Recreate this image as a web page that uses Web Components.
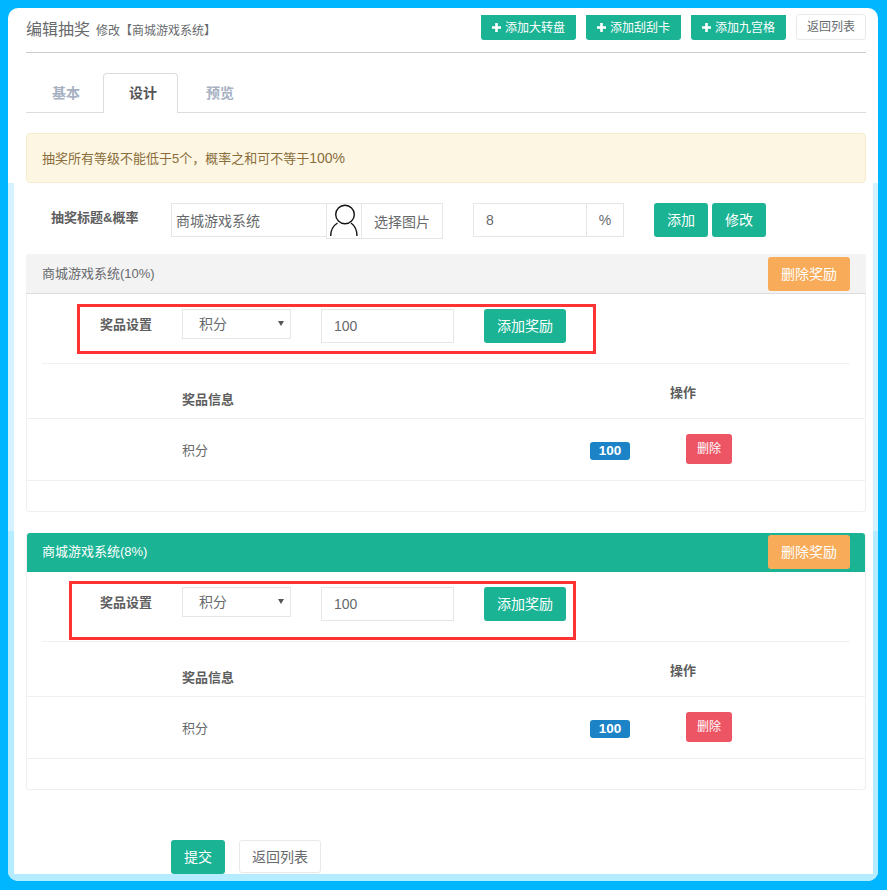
<!DOCTYPE html>
<html lang="zh">
<head>
<meta charset="utf-8">
<title>编辑抽奖</title>
<style>
  html, body { margin: 0; padding: 0; }
  body { background: #00b7ff; font-family: "Liberation Sans", "Noto Sans CJK SC", sans-serif; color: #676a6c; }
</style>
</head>
<body>
<lottery-page>
  <page-head slot="head" title-text="编辑抽奖" sub-text="修改【商城游戏系统】">
    <ui-btn tone="green" plus style="width:95px;height:25px;font-size:12px;border-radius:0 0 3px 3px;margin-top:7px">添加大转盘</ui-btn>
    <ui-btn tone="green" plus style="width:95px;height:25px;font-size:12px;border-radius:0 0 3px 3px;margin-top:7px">添加刮刮卡</ui-btn>
    <ui-btn tone="green" plus style="width:95px;height:25px;font-size:12px;border-radius:0 0 3px 3px;margin-top:7px">添加九宫格</ui-btn>
    <ui-btn tone="white" style="width:70px;height:26px;font-size:12px;margin-top:6px">返回列表</ui-btn>
  </page-head>
  <tab-bar slot="head"></tab-bar>
  <alert-box slot="head"></alert-box>

  <title-row></title-row>

  <prize-panel heading="商城游戏系统(10%)" style="margin-top:15px"></prize-panel>
  <prize-panel heading="商城游戏系统(8%)" active style="margin-top:21px"></prize-panel>

  <form-foot></form-foot>
</lottery-page>

<script>
// ── Bouton ────────────────────────────────────────────────────────────────────
class UiBtn extends HTMLElement {
  constructor() {
    super();
    const shadow = this.attachShadow({ mode: "open" });
    const plus = this.hasAttribute("plus")
      ? `<svg width="9" height="9" viewBox="0 0 9 9"><path d="M3.2 0h2.6v3.2H9v2.6H5.8V9H3.2V5.8H0V3.2h3.2z" fill="#fff"/></svg>`
      : "";
    shadow.innerHTML = `
      <style>
        :host {
          display: inline-flex;
          align-items: center;
          justify-content: center;
          gap: 4px;
          box-sizing: border-box;
          flex: none;
          font-size: 14px;
          line-height: 20px;
          border-radius: 3px;
          color: #fff;
        }
        :host([tone="green"]) { background: #1ab394; }
        :host([tone="orange"]) { background: #f8ac59; }
        :host([tone="red"]) { background: #ed5565; }
        :host([tone="white"]) { background: #fff; border: 1px solid #e7eaec; color: #676a6c; }
      </style>
      ${plus}<slot></slot>
    `;
  }
}
customElements.define("ui-btn", UiBtn);

// ── Cadre de page ─────────────────────────────────────────────────────────────
class LotteryPage extends HTMLElement {
  constructor() {
    super();
    this.attachShadow({ mode: "open" }).innerHTML = `
      <style>
        :host { display: block; box-sizing: border-box; height: 890px; padding: 8px 9px 9px 8px; }
        .panel { height: 873px; background: #fff; border-radius: 10px; overflow: hidden; display: flex; flex-direction: column; }
        .head { height: 175px; padding: 0 12px 0 18px; flex: none; }
        .strip {
          flex: 1;
          padding: 0 5px 7px 6px;
          background: linear-gradient(#d4f2ff 0, #d4f2ff 348px, #b6ecff 348px);
          display: flex;
        }
        .inner { flex: 1; background: #fff; padding: 20px 7px 0 12px; min-width: 0; }
      </style>
      <div class="panel">
        <div class="head"><slot name="head"></slot></div>
        <div class="strip"><div class="inner"><slot></slot></div></div>
      </div>
    `;
  }
}
customElements.define("lottery-page", LotteryPage);

// ── En-tête ───────────────────────────────────────────────────────────────────
class PageHead extends HTMLElement {
  connectedCallback() {
    if (this.shadowRoot) return;
    this.attachShadow({ mode: "open" }).innerHTML = `
      <style>
        :host { display: flex; box-sizing: border-box; height: 45px; border-bottom: 1px solid #ccc; align-items: flex-start; justify-content: space-between; }
        .title { margin-top: 11px; line-height: 22px; font-size: 16px; color: #676a6c; white-space: nowrap; }
        small { font-size: 12px; margin-left: 6px; color: #676a6c; }
        .tools { display: flex; gap: 10px; align-items: flex-start; }
      </style>
      <div class="title">${this.getAttribute("title-text")}<small>${this.getAttribute("sub-text")}</small></div>
      <div class="tools"><slot></slot></div>
    `;
  }
}
customElements.define("page-head", PageHead);

// ── Onglets ───────────────────────────────────────────────────────────────────
class TabBar extends HTMLElement {
  constructor() {
    super();
    this.attachShadow({ mode: "open" }).innerHTML = `
      <style>
        :host { display: flex; box-sizing: border-box; height: 40px; margin-top: 20px; border-bottom: 1px solid #ddd; }
        div { box-sizing: border-box; height: 40px; padding: 0 21px 0 26px; font-size: 14px; font-weight: bold; line-height: 40px; color: #a7b1c2; }
        .first { margin-right: 2px; }
        .last { padding-left: 28px; }
        .on { color: #555; background: #fff; border: 1px solid #ddd; border-bottom: 0; border-radius: 4px 4px 0 0; padding-left: 25px; padding-right: 20px; line-height: 38px; }
      </style>
      <div class="first">基本</div><div class="on">设计</div><div class="last">预览</div>
    `;
  }
}
customElements.define("tab-bar", TabBar);

// ── Alerte ────────────────────────────────────────────────────────────────────
class AlertBox extends HTMLElement {
  constructor() {
    super();
    this.attachShadow({ mode: "open" }).innerHTML = `
      <style>
        :host {
          display: block; box-sizing: border-box; height: 50px; margin-top: 20px; padding: 0 15px;
          background: #fdf6e3; border: 1px solid #f6ebcd; border-radius: 4px;
          color: #8a6d3b; font-size: 13px; line-height: 48px;
        }
        .comma { font-family: "Noto Sans CJK TC", sans-serif; }
        .num { font-size: 14px; }
      </style>
      抽奖所有等级不能低于5个<span class="comma">，</span>概率之和可不等于<span class="num">100%</span>
    `;
  }
}
customElements.define("alert-box", AlertBox);

// ── Ligne titre & probabilité ─────────────────────────────────────────────────
class TitleRow extends HTMLElement {
  constructor() {
    super();
    this.attachShadow({ mode: "open" }).innerHTML = `
      <style>
        :host { display: flex; height: 36px; align-items: flex-start; }
        .label { box-sizing: border-box; width: 145px; padding-left: 25px; font-size: 13px; font-weight: bold; line-height: 30px; white-space: nowrap; color: #5e5e5e; }
        .box { box-sizing: border-box; height: 34px; border: 1px solid #e5e6e7; font-size: 14px; line-height: 34px; color: #676a6c; flex: none; }
        .name { width: 155px; padding-left: 4px; border-right: 0; }
        .avatar { width: 36px; height: 36px; overflow: hidden; display: block; margin-right: -1px; }
        .pick { width: 82px; height: 36px; text-align: center; line-height: 36px; }
        .num { width: 114px; margin-left: 30px; padding-left: 12px; line-height: 32px; }
        .unit { width: 38px; margin-left: -1px; text-align: center; line-height: 32px; }
        ui-btn { width: 54px; height: 34px; }
      </style>
      <div class="label">抽奖标题&amp;概率</div>
      <div class="box name">商城游戏系统</div>
      <div class="box avatar"><svg width="34" height="34" viewBox="0 0 34 34" fill="none" stroke="#111" stroke-width="1.4">
        <circle cx="18" cy="10.5" r="9.3"/>
        <path d="M3.7 32C3.7 26 6.5 21.5 10.5 19M30 32C30 26 27.5 21.5 24 19"/>
      </svg></div>
      <div class="box pick">选择图片</div>
      <div class="box num">8</div>
      <div class="box unit">%</div>
      <ui-btn tone="green" style="margin-left:30px">添加</ui-btn>
      <ui-btn tone="green" style="margin-left:4px">修改</ui-btn>
    `;
  }
}
customElements.define("title-row", TitleRow);

// ── Bloc de récompense ────────────────────────────────────────────────────────
class PrizePanel extends HTMLElement {
  connectedCallback() {
    if (this.shadowRoot) return;
    this.attachShadow({ mode: "open" }).innerHTML = `
      <style>
        :host { display: block; position: relative; box-sizing: border-box; border: 1px solid #eff0f2; border-top: 0; border-radius: 3px; }
        .top {
          box-sizing: border-box; height: 40px; margin: 0 -1px; padding: 3px 16px 0 16px;
          display: flex; justify-content: space-between; align-items: flex-start;
          background: #f3f3f4; border-bottom: 1px solid #ddd; border-radius: 3px 3px 0 0;
          font-size: 13px; line-height: 34px; color: #676a6c;
        }
        :host([active]) .top { height: 39px; margin: 0; padding: 2px 15px 0 15px; background: #1ab394; border-bottom: 0; color: #fff; }
        .top ui-btn { width: 82px; height: 34px; }
        .form { display: flex; align-items: flex-start; height: 34px; padding-top: 15px; }
        .form b { width: 155px; padding-left: 73px; box-sizing: border-box; font-size: 13px; line-height: 32px; color: #5e5e5e; white-space: nowrap; }
        .select {
          position: relative; box-sizing: border-box; width: 109px; height: 30px; padding-left: 16px;
          border: 1px solid #e5e6e7; font-size: 14px; line-height: 28px; flex: none;
        }
        .select::after {
          content: ""; position: absolute; right: 6px; top: 11px;
          border: 3px solid transparent; border-top: 5px solid #555; border-bottom: 0;
        }
        .input { box-sizing: border-box; width: 133px; height: 34px; margin-left: 30px; padding-left: 12px; border: 1px solid #e5e6e7; font-size: 14px; line-height: 33px; flex: none; }
        .form ui-btn { width: 82px; height: 34px; margin-left: 30px; }
        .rule { height: 1px; margin: 20px 15px 0; background: #eff0f2; }
        .grid { display: grid; grid-template-columns: 155px 408px 96px 1fr; }
        .thead { height: 54px; border-bottom: 1px solid #eff0f2; grid-template-columns: 155px 488px 1fr; font-size: 13px; font-weight: bold; line-height: 20px; color: #5e5e5e; }
        .thead div:nth-child(2) { padding-top: 26px; }
        .thead div:nth-child(3) { padding-top: 19px; }
        .row { height: 61px; border-bottom: 1px solid #eff0f2; font-size: 13px; line-height: 20px; }
        .row .name { grid-column: 2; padding-top: 22px; }
        .badge {
          display: block; box-sizing: border-box; width: 40px; height: 18px; margin-top: 23px;
          background: #1c84c6; border-radius: 3px; color: #fff; font-size: 13.5px; font-weight: bold; line-height: 18px; text-align: center;
        }
        .row ui-btn { width: 46px; height: 30px; margin-top: 15px; font-size: 12px; }
        .foot { height: 30px; }
        .mark { position: absolute; box-sizing: border-box; left: 50px; top: 50px; width: 519px; height: 50px; border: 3px solid #ff3333; pointer-events: none; }
        :host([active]) .mark { left: 42px; top: 48px; width: 507px; height: 59px; }
      </style>
      <div class="top">${this.getAttribute("heading")}<ui-btn tone="orange">删除奖励</ui-btn></div>
      <div class="form">
        <b>奖品设置</b>
        <div class="select">积分</div>
        <div class="input">100</div>
        <ui-btn tone="green">添加奖励</ui-btn>
      </div>
      <div class="rule"></div>
      <div class="grid thead"><div></div><div>奖品信息</div><div>操作</div></div>
      <div class="grid row">
        <div class="name">积分</div>
        <div><span class="badge">100</span></div>
        <div><ui-btn tone="red">删除</ui-btn></div>
      </div>
      <div class="foot"></div>
      <div class="mark"></div>
    `;
  }
}
customElements.define("prize-panel", PrizePanel);

// ── Pied de formulaire ────────────────────────────────────────────────────────
class FormFoot extends HTMLElement {
  constructor() {
    super();
    this.attachShadow({ mode: "open" }).innerHTML = `
      <style>
        :host { display: flex; align-items: flex-start; gap: 14px; margin-top: 50px; padding-left: 145px; }
        .ok { width: 54px; height: 34px; }
        .back { width: 82px; height: 33px; }
      </style>
      <ui-btn tone="green" class="ok">提交</ui-btn>
      <ui-btn tone="white" class="back">返回列表</ui-btn>
    `;
  }
}
customElements.define("form-foot", FormFoot);
</script>
</body>
</html>
